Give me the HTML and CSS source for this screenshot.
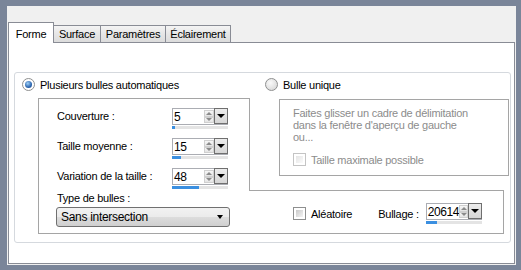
FILE: index.html
```html
<!DOCTYPE html>
<html lang="fr">
<head>
    <meta charset="UTF-8">
    <title>Bulles</title>
    <link rel="stylesheet" href="styles.css">
</head>
<body>
    <div class="win">
        <div class="tabs">
            <span class="tab active">Forme</span>
            <span class="tab w48">Surface</span>
            <span class="tab w66">Paramètres</span>
            <span class="tab w66">Éclairement</span>
        </div>
        <div class="panel">
            <div class="group">
                <div class="top">
                    <div class="col-left">
                        <div class="radio on"><i></i>Plusieurs bulles automatiques</div>
                        <div class="lbox">
                            <div class="row">
                                <span class="lbl">Couverture :</span>
                                <div class="spin">
                                    <div class="spin-main"><span class="spin-val">5</span><span class="spin-arrows"><b class="up"></b><b class="down"></b></span><span class="spin-drop"><b></b></span></div>
                                    <div class="spin-bar"><div class="fill" style="width:3px"></div></div>
                                </div>
                            </div>
                            <div class="row">
                                <span class="lbl">Taille moyenne :</span>
                                <div class="spin">
                                    <div class="spin-main"><span class="spin-val">15</span><span class="spin-arrows"><b class="up"></b><b class="down"></b></span><span class="spin-drop"><b></b></span></div>
                                    <div class="spin-bar"><div class="fill" style="width:9px"></div></div>
                                </div>
                            </div>
                            <div class="row">
                                <span class="lbl">Variation de la taille :</span>
                                <div class="spin">
                                    <div class="spin-main"><span class="spin-val">48</span><span class="spin-arrows"><b class="up"></b><b class="down"></b></span><span class="spin-drop"><b></b></span></div>
                                    <div class="spin-bar"><div class="fill" style="width:27px"></div></div>
                                </div>
                            </div>
                        </div>
                    </div>
                    <div class="col-right">
                        <div class="radio"><i></i>Bulle unique</div>
                        <div class="rbox">
                            <p>Faites glisser un cadre de délimitation<br>dans la fenêtre d'aperçu de gauche<br>ou...</p>
                            <div class="check dis"><i></i>Taille maximale possible</div>
                        </div>
                    </div>
                </div>
                <div class="bottom">
                    <div class="b-left">
                        <div class="lbl">Type de bulles :</div>
                        <div class="combo">Sans intersection<b></b></div>
                    </div>
                    <div class="b-right">
                        <div class="check"><i></i>Aléatoire</div>
                        <span class="lbl">Bullage :</span>
                        <div class="spin">
                            <div class="spin-main"><span class="spin-val">20614</span><span class="spin-arrows"><b class="up"></b><b class="down"></b></span><span class="spin-drop"><b></b></span></div>
                            <div class="spin-bar"><div class="fill" style="width:11px"></div></div>
                        </div>
                    </div>
                </div>
            </div>
        </div>
    </div>
</body>
</html>
```

FILE: styles.css
```css
* {
    margin: 0;
    padding: 0;
    box-sizing: border-box;
}
body {
    background-color: #7a8599;
    font: 11px "Liberation Sans", Arial, sans-serif;
    letter-spacing: -0.25px;
    color: #000;
    padding: 6px 5px 5px 7px;
    height: 270px;
    overflow: hidden;
}
.win {
    background-color: #f0f0f0;
    height: 259px;
    padding: 16px 1px 0 1px;
}

/* tabs */
.tabs {
    display: flex;
    align-items: flex-end;
    height: 21px;
    margin-bottom: -1px;
    position: relative;
    z-index: 1;
}
.tab {
    height: 17px;
    margin-bottom: 1px;
    margin-left: -1px;
    border: 1px solid #898c95;
    border-bottom: 0;
    background: linear-gradient(#f4f4f4, #e6e6e6 50%, #dcdcdc);
    text-align: center;
    line-height: 16px;
}
.tab.active {
    width: 46px;
    height: 21px;
    margin: 0;
    background: #fff;
    line-height: 22px;
}
.w48 { width: 48px; }
.w66 { width: 66px; }

.panel {
    background-color: #fff;
    border: 1px solid #898c95;
    height: 222px;
    padding: 29px 4px 0 5px;
}

/* group */
.group {
    width: 497px;
    height: 171px;
    border: 1px solid #d5d9de;
    border-radius: 3px;
    padding: 5px 0 0 7px;
}
.top {
    display: flex;
}
.col-left {
    width: 228px;
}
.col-right {
    width: 244px;
    margin-left: 15px;
}
.radio {
    display: flex;
    align-items: center;
    height: 13px;
}
.radio i {
    width: 13px;
    height: 13px;
    margin-right: 5px;
    border: 1px solid #8e8f8f;
    border-radius: 50%;
    background: radial-gradient(circle at 40% 35%, #fafafa, #d2d2d2);
    display: flex;
    align-items: center;
    justify-content: center;
}
.radio.on i {
    background: #fff;
}
.radio.on i::after {
    content: "";
    width: 7px;
    height: 7px;
    border-radius: 50%;
    background: radial-gradient(circle at 40% 35%, #9fd0f6, #2d66b0 60%, #1b3f7a);
}

.lbox {
    width: 212px;
    height: 92px;
    margin: 7px 0 0 16px;
    border: 1px solid #a5a5a5;
    border-bottom: 0;
    padding: 9px 0 0 18px;
}
.row {
    display: flex;
    height: 21px;
    margin-bottom: 9px;
}
.row .lbl {
    width: 115px;
    line-height: 16px;
}

/* spin box */
.spin {
    width: 56px;
}
.spin-main {
    display: flex;
    height: 17px;
    border: 1px solid #abadb3;
    border-right: 0;
    background-color: #fff;
}
.spin-val {
    flex: 1;
    font-size: 12px;
    letter-spacing: -0.4px;
    line-height: 16px;
    padding-left: 1px;
    white-space: nowrap;
}
.spin-arrows {
    width: 10px;
    display: flex;
    flex-direction: column;
    padding: 1px 0;
}
.spin-arrows b {
    flex: 1;
    display: flex;
    align-items: center;
    justify-content: center;
    background: linear-gradient(#f6f6f6, #e4e4e4);
    border: 1px solid #d0d0d0;
}
.spin-arrows b::after {
    content: "";
    border-left: 3px solid transparent;
    border-right: 3px solid transparent;
}
.spin-arrows .up::after {
    border-bottom: 3px solid #8a8a8a;
}
.spin-arrows .down::after {
    border-top: 3px solid #8a8a8a;
}
.spin-drop {
    width: 14px;
    margin-top: -1px;
    border: 1px solid #6f6f6f;
    background: linear-gradient(#ececec, #d6d6d6);
    display: flex;
    align-items: center;
    justify-content: center;
}
.spin-drop b {
    border-top: 4px solid #000;
    border-left: 4px solid transparent;
    border-right: 4px solid transparent;
}
.spin-bar {
    height: 3px;
    margin-top: 1px;
    background-color: #e4e4e4;
}
.fill {
    height: 3px;
    background-color: #3b8fe0;
}

/* right box */
.rbox {
    width: 230px;
    height: 77px;
    margin: 8px 0 0 14px;
    border: 1px solid #a5a5a5;
    padding: 7px 0 0 13px;
    color: #8c8c8c;
    line-height: 12px;
}
.rbox .check {
    margin-top: 10px;
}
.check {
    display: flex;
    align-items: center;
    height: 13px;
}
.check i {
    width: 13px;
    height: 13px;
    margin-right: 5px;
    border: 1px solid #8e8f8f;
    background-color: #fff;
    padding: 2px;
}
.check i::after {
    content: "";
    display: block;
    width: 7px;
    height: 7px;
    background: linear-gradient(135deg, #c9c9c9, #f4f4f4);
}
.check.dis i {
    border-color: #c4c4c4;
}
.check.dis i::after {
    background: linear-gradient(135deg, #e4e4e4, #fbfbfb);
}

/* bottom part */
.bottom {
    display: flex;
    height: 44px;
    margin-left: 16px;
}
.b-left {
    width: 212px;
    border-left: 1px solid #a5a5a5;
    border-bottom: 1px solid #a5a5a5;
    padding: 1px 0 0 18px;
}
.b-left .lbl {
    line-height: 14px;
}
.combo {
    width: 174px;
    height: 20px;
    margin: 2px 0 0 -1px;
    border: 1px solid #707070;
    border-radius: 3px;
    background: linear-gradient(#f2f2f2, #ebebeb 50%, #dddddd 50%, #cfcfcf);
    padding: 0 6px 0 4px;
    line-height: 18px;
    font-size: 12px;
    letter-spacing: -0.3px;
    display: flex;
    justify-content: space-between;
    align-items: center;
}
.combo b {
    border-top: 4px solid #000;
    border-left: 3.5px solid transparent;
    border-right: 3.5px solid transparent;
}
.b-right {
    width: 255px;
    margin-left: -1px;
    border: 1px solid #a5a5a5;
    border-left: 0;
    display: flex;
    align-items: center;
    padding: 3px 0 0 44px;
}
.b-right .lbl {
    margin: 0 7px 0 26px;
}
```
